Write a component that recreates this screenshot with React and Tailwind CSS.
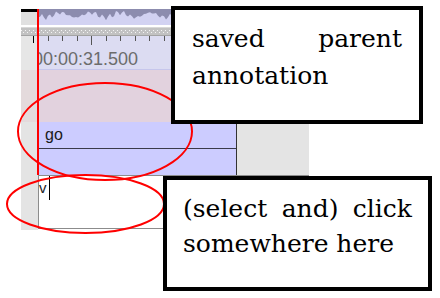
import React from 'react';

// jagged top-filled waveform, deterministic
const wavePath = (() => {
  const pts = [];
  for (let x = 0; x <= 271; x += 2) {
    const d = 6 + 2.4 * Math.sin(x * 0.21) + 1.6 * Math.sin(x * 0.93 + 1) + 1.3 * Math.sin(x * 2.3 + 2);
    pts.push(`${x},${d.toFixed(1)}`);
  }
  return `M0,0 L${pts.join(' L')} L271,0 Z`;
})();

const ticks = Array.from({ length: 20 }, (_, i) => 12 + i * 14.5);

const Ruler = () => (
  <svg className="absolute left-0 top-0" width="288" height="10">
    {ticks.map((x, i) => (
      <rect
        key={i}
        x={Math.round(x)}
        y="0"
        width="1"
        height={i === 0 ? 7 : i % 10 === 4 ? 9 : 5}
        fill={i === 0 ? '#000' : '#555'}
      />
    ))}
  </svg>
);

const DottedStrip = () => (
  <svg width="288" height="9" className="block">
    <defs>
      <pattern id="dots" width="4" height="9" patternUnits="userSpaceOnUse">
        <rect x="0" y="3" width="1" height="1" fill="#f4f4f4" />
        <rect x="2" y="5" width="1" height="1" fill="#f4f4f4" />
      </pattern>
    </defs>
    <rect width="288" height="9" fill="#c2c2c2" />
    <rect width="288" height="1" fill="#d8d8d8" />
    <rect y="8" width="288" height="1" fill="#a4a4a4" />
    <rect width="288" height="9" fill="url(#dots)" />
  </svg>
);

const Timeline = () => (
  <div className="relative ml-[21px] mt-[9px] w-[288px] flex flex-col font-['Liberation_Sans']">
    {/* waveform */}
    <div className="flex h-[16px]">
      <div className="w-[17px] bg-[#e0e0e0] border-t-[3px] border-black" />
      <div className="flex-1 bg-[#d2d2f2]">
        <svg width="271" height="16" className="block">
          <path d={wavePath} fill="#8c8cae" />
        </svg>
      </div>
    </div>
    <div className="h-[2px] bg-white" />
    <DottedStrip />

    {/* time ruler */}
    <div className="relative flex h-[34px]">
      <div className="w-[17px] bg-[#e6e6e6]" />
      <div className="flex-1 overflow-hidden bg-[#dcdcf2] border-b border-[#c6c6ec]">
        <div className="-ml-[5px] pt-[13px] text-[18px] leading-[20px] text-[#6c6c6c] whitespace-nowrap">
          00:00:31.500
        </div>
      </div>
      <Ruler />
    </div>

    {/* parent tier */}
    <div className="flex h-[52px]">
      <div className="w-[17px] bg-[#e4dadc]" />
      <div className="flex-1 bg-[#e2d2de]" />
    </div>

    {/* annotation tiers */}
    <div className="flex">
      <div className="w-[17px] bg-[#e4e4e4]" />
      <div className="flex flex-1 bg-[#e4e4e4]">
        <div className="w-[199px] border-r border-[#333] bg-[#ccccff]">
          <div className="h-[27px] border-b border-[#3a3a4a] pl-[7px] text-[16px] leading-[26px] text-[#1a1a1a]">
            go
          </div>
          <div className="h-[26px]" />
        </div>
      </div>
    </div>

    {/* edit tier */}
    <div className="flex h-[55px]">
      <div className="w-[17px] bg-[#e4e4e4]" />
      <div className="flex-1">
        <div className="flex h-[54px] items-start border border-r-0 border-[#8c8c8c] bg-white">
          <span className="text-[15px] leading-[24px] text-[#222]">v</span>
          <span className="ml-[2px] h-[24px] w-[1.5px] bg-black" />
        </div>
      </div>
    </div>

    {/* time cursor */}
    <div className="absolute left-[16px] top-0 h-[166px] w-[2px] bg-[#ff0000]" />
  </div>
);

export default function App() {
  return (
    <div className="relative h-[298px] w-[440px] overflow-hidden bg-white">
      <Timeline />

      <svg className="pointer-events-none absolute left-0 top-0" width="440" height="298">
        <ellipse cx="105" cy="131.5" rx="87" ry="48.5" fill="none" stroke="#ff0000" strokeWidth="2" />
        <ellipse cx="85.5" cy="204" rx="78.5" ry="29" fill="none" stroke="#ff0000" strokeWidth="2" />
      </svg>

      <div className="absolute left-[171px] top-[6px] h-[118px] w-[252px] border-4 border-black bg-white px-[17px] pt-[10px] text-justify text-[25px] leading-[37px] text-black font-['DejaVu_Serif']">
        saved parent annotation
      </div>

      <div className="absolute left-[163px] top-[176px] h-[115px] w-[269px] border-4 border-black bg-white px-[16px] pt-[11px] text-justify text-[25px] leading-[35px] text-black font-['DejaVu_Serif']">
        (select and) click somewhere here
      </div>
    </div>
  );
}
